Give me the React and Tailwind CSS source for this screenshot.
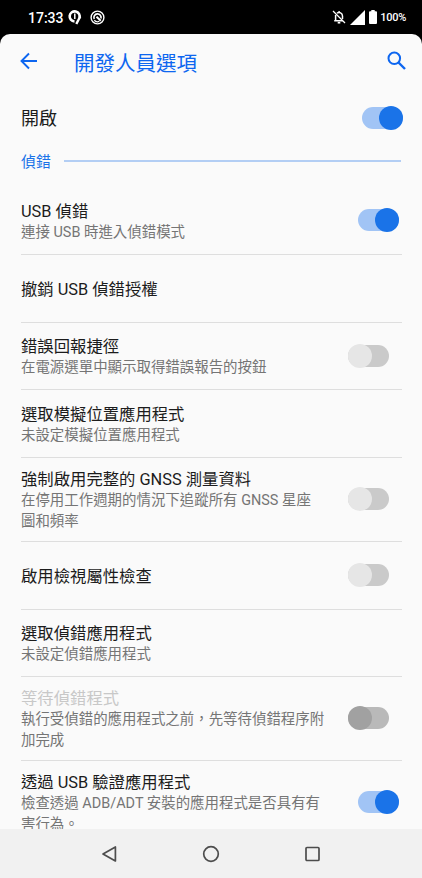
import React, { useState } from "react";

const SETTINGS = [
  {
    id: "usb",
    title: "USB 偵錯",
    summary: ["連接 USB 時進入偵錯模式"],
    toggle: "on",
    height: "h-[68px]",
  },
  { id: "revoke", title: "撤銷 USB 偵錯授權", height: "h-[68px]" },
  {
    id: "bugreport",
    title: "錯誤回報捷徑",
    summary: ["在電源選單中顯示取得錯誤報告的按鈕"],
    toggle: "off",
    height: "h-[67px]",
  },
  {
    id: "mock",
    title: "選取模擬位置應用程式",
    summary: ["未設定模擬位置應用程式"],
    height: "h-[68px]",
  },
  {
    id: "gnss",
    title: "強制啟用完整的 GNSS 測量資料",
    summary: ["在停用工作週期的情況下追蹤所有 GNSS 星座", "圖和頻率"],
    toggle: "off",
    height: "h-[84px]",
  },
  {
    id: "inspect",
    title: "啟用檢視屬性檢查",
    toggle: "off",
    height: "h-[68px]",
  },
  {
    id: "debugapp",
    title: "選取偵錯應用程式",
    summary: ["未設定偵錯應用程式"],
    height: "h-[67px]",
  },
  {
    id: "wait",
    title: "等待偵錯程式",
    summary: ["執行受偵錯的應用程式之前，先等待偵錯程序附", "加完成"],
    toggle: "off",
    disabled: true,
    height: "h-[84px]",
  },
  {
    id: "verify",
    title: "透過 USB 驗證應用程式",
    summary: ["檢查透過 ADB/ADT 安裝的應用程式是否具有有", "害行為。"],
    toggle: "on",
    height: "h-[83px]",
  },
];

function Toggle({ label, on, disabled, onChange }) {
  let track = "bg-[#cacaca]";
  let thumb = "bg-[#e6e6e6]";
  if (on) {
    track = "bg-[#a1c4f5]";
    thumb = "bg-[#1a73e8]";
  } else if (disabled) {
    track = "bg-[#b9b9b9]";
    thumb = "bg-[#a1a1a1]";
  }
  return (
    <button
      type="button"
      role="switch"
      aria-label={label}
      aria-checked={on}
      disabled={disabled}
      onClick={onChange}
      className={`mb-px flex h-[22px] w-[41px] shrink-0 items-center rounded-full ${track} ${
        on ? "justify-end" : "justify-start"
      }`}
    >
      <span className={`h-6 w-6 shrink-0 rounded-full ${thumb}`} />
    </button>
  );
}

function StatusBar() {
  return (
    <div className="flex h-[34px] shrink-0 items-center bg-black pr-4 pl-7 text-white">
      <span className="mt-px text-[14px] leading-5 font-medium">17:33</span>
      <svg className="ml-[3px]" width="16" height="16" viewBox="0 0 16 16" fill="none">
        <path d="M7.500 12.400A5 5 0 1 1 12.400 9" stroke="#fff" strokeWidth="2.600" />
        <path d="M13.200 7.500L9.300 15" stroke="#fff" strokeWidth="2.400" />
        <path d="M7.800 4.500v5.500" stroke="#fff" strokeWidth="1.500" />
      </svg>
      <svg className="ml-[7px]" width="15" height="15" viewBox="0 0 15 15" fill="none">
        <circle cx="7.500" cy="7.500" r="6.400" stroke="#fff" strokeWidth="1.400" />
        <path d="M4.200 9A3.600 3.600 0 1 1 10.900 8.600" stroke="#fff" strokeWidth="1.700" />
        <path d="M6.500 6.800l4.300 3.900" stroke="#fff" strokeWidth="2" />
        <path d="M4.300 10.300c1.300 1.500 3.300 1.900 5 1" stroke="#fff" strokeWidth="1.300" />
      </svg>
      <div className="ml-auto flex items-center">
        {/* muted bell */}
        <svg width="14" height="14" viewBox="0 0 14 14" fill="none" stroke="#fff" strokeWidth="1.500">
          <path d="M5 3.200A3.500 3.500 0 0 1 10.500 6v3M3.600 5v5.300M2.200 10.700h8.600M7.100 1v1.500" />
          <path d="M1 1l12 12" strokeWidth="1.300" />
          <path d="M5.700 12.700h2.600" strokeWidth="1.700" />
        </svg>
        <svg className="ml-[4px]" width="15" height="15" viewBox="0 0 15 15">
          <path d="M15 0v15H0z" fill="#fff" />
        </svg>
        <svg className="ml-[4px]" width="8" height="14" viewBox="0 0 8 14">
          <path d="M2.300 0h3.400v1.300H7a1 1 0 0 1 1 1V13a1 1 0 0 1-1 1H1a1 1 0 0 1-1-1V2.300a1 1 0 0 1 1-1h1.300z" fill="#fff" />
        </svg>
        <span className="mt-px ml-[3px] text-[11px] leading-4 font-medium tracking-[-0.25px]">100%</span>
      </div>
    </div>
  );
}

function SettingRow({ item, on, last, onToggle }) {
  return (
    <li
      className={`flex shrink-0 items-center justify-between ${item.height} ${
        last ? "" : "border-b border-[#dedede]"
      } ${on ? "pr-[3px]" : "pr-[13px]"}`}
    >
      <div className="mt-[2px] whitespace-nowrap">
        <h3
          className={`text-[16.35px] leading-[21px] ${
            item.disabled ? "text-[#c8c8c8]" : "text-[#1c1c1c]"
          }`}
        >
          {item.title}
        </h3>
        {item.summary?.map((line) => (
          <p key={line} className="text-[14.45px] leading-[21px] text-[#757575]">
            {line}
          </p>
        ))}
      </div>
      {item.toggle && (
        <Toggle label={item.title} on={on} disabled={item.disabled} onChange={onToggle} />
      )}
    </li>
  );
}

function NavBar() {
  return (
    <nav className="flex h-[49px] shrink-0 items-center justify-between bg-[#f1f1f1] pr-[101px] pl-[101px] text-[#4d4d4d]">
      <svg width="17" height="18" viewBox="0 0 17 18" fill="none" stroke="currentColor" strokeWidth="1.700" strokeLinejoin="round">
        <path d="M14.400 2v14L2 9z" />
      </svg>
      <svg width="18" height="18" viewBox="0 0 18 18" fill="none" stroke="currentColor" strokeWidth="1.700">
        <circle cx="9" cy="9" r="7.300" />
      </svg>
      <svg width="17" height="18" viewBox="0 0 17 18" fill="none" stroke="currentColor" strokeWidth="1.700">
        <rect x="2" y="2.500" width="13" height="13" rx="1" />
      </svg>
    </nav>
  );
}

function App() {
  const [enabled, setEnabled] = useState(true);
  const [values, setValues] = useState({ usb: true, verify: true });

  const toggle = (id) => setValues((prev) => ({ ...prev, [id]: !prev[id] }));

  return (
    <div
      lang="zh-Hant"
      className="flex h-[878px] w-[422px] flex-col overflow-hidden bg-black font-[Roboto,'Noto_Sans_CJK_TC',sans-serif]"
    >
      <StatusBar />
      <main className="flex min-h-0 flex-1 flex-col overflow-hidden rounded-t-[10px] bg-[#fafafa]">
        <header className="flex h-[56px] shrink-0 items-center pr-4 pl-5 text-[#0d66f0]">
          <svg width="18" height="18" viewBox="0 0 18 18" fill="none" stroke="currentColor" strokeWidth="1.900" className="mb-[3px]">
            <path d="M17 9H2M9 1.500L1.500 9L9 16.500" />
          </svg>
          <h1 className="mt-[3px] ml-[36px] text-[20.5px] leading-7">開發人員選項</h1>
          <svg width="19" height="19" viewBox="0 0 19 19" fill="none" stroke="currentColor" strokeWidth="2" className="mb-[3px] ml-auto">
            <circle cx="7.300" cy="7.300" r="5.800" />
            <path d="M11.500 11.500L18 18" strokeWidth="2.400" />
          </svg>
        </header>

        <div className="flex h-[56px] shrink-0 items-center justify-between pr-[19px] pl-[21px]">
          <h2 className="mt-[2px] text-[18px] leading-6 text-[#1c1c1c]">開啟</h2>
          <Toggle label="開啟" on={enabled} onChange={() => setEnabled(!enabled)} />
        </div>

        <div className="flex h-[41px] shrink-0 items-start gap-[13px] pt-[6px] pr-[21px] pl-[21px]">
          <h2 className="text-[14.9px] leading-[21px] text-[#1a73e8]">偵錯</h2>
          <div className="mt-[8px] h-[2px] flex-1 bg-[#b3cef4]" />
        </div>

        <ul className="flex flex-col pr-5 pl-[21px]">
          {SETTINGS.map((item, i) => (
            <SettingRow
              key={item.id}
              item={item}
              on={!!values[item.id]}
              last={i === SETTINGS.length - 1}
              onToggle={() => toggle(item.id)}
            />
          ))}
        </ul>
      </main>
      <NavBar />
    </div>
  );
}

export default App;
